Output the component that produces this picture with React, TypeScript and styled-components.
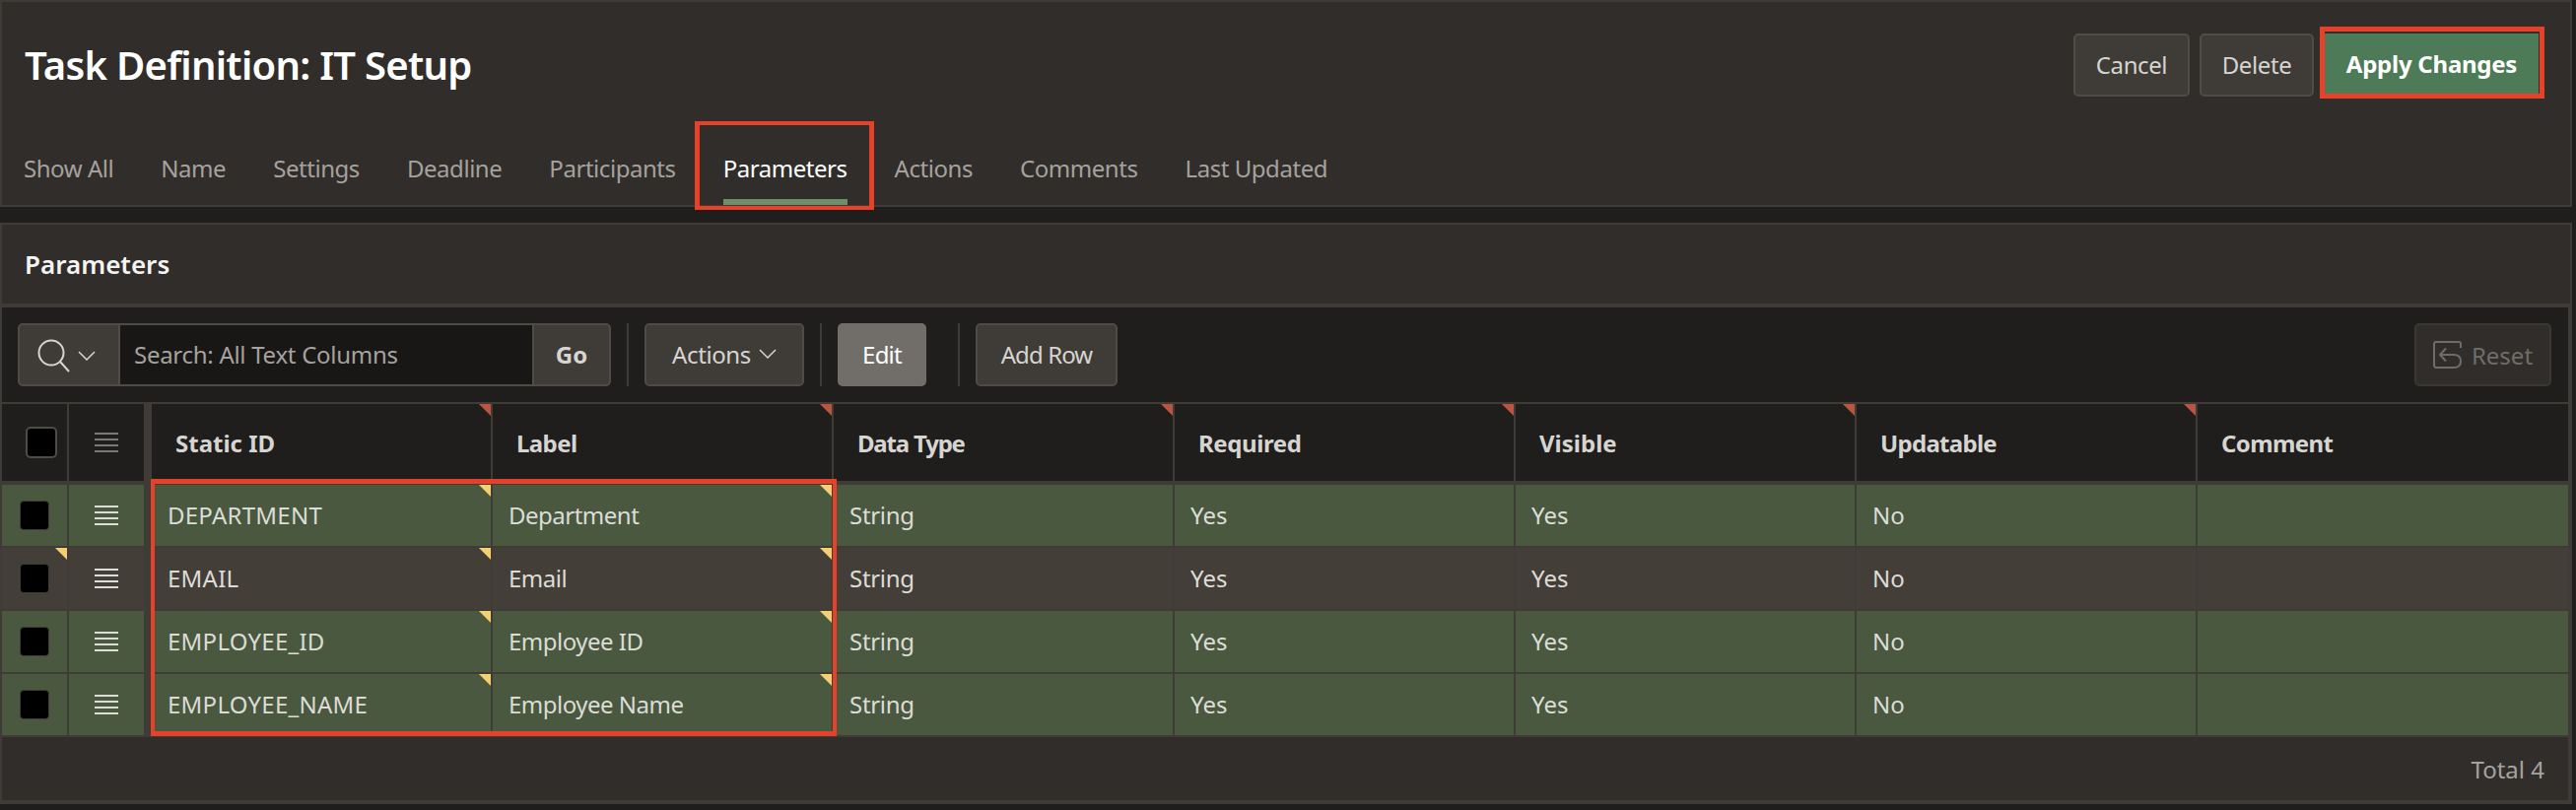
import styled, { createGlobalStyle } from "styled-components";

const GlobalStyle = createGlobalStyle`
  html, body {
    margin: 0;
    padding: 0;
    background: #1f1e1c;
  }
  * {
    box-sizing: border-box;
  }
`;

const tabs = ["Show All", "Name", "Settings", "Deadline", "Participants", "Parameters", "Actions", "Comments", "Last Updated"];
const columns = [
  { title: "Static ID", flagged: true, spacing: 0 },
  { title: "Label", flagged: true, spacing: -0.6 },
  { title: "Data Type", flagged: true, spacing: -1.2 },
  { title: "Required", flagged: true, spacing: -0.4 },
  { title: "Visible", flagged: true, spacing: 0 },
  { title: "Updatable", flagged: true, spacing: -0.7 },
  { title: "Comment", flagged: false, spacing: -0.6 },
];
const rows = [
  { id: "DEPARTMENT", label: "Department", changed: true },
  { id: "EMAIL", label: "Email", changed: false },
  { id: "EMPLOYEE_ID", label: "Employee ID", changed: true },
  { id: "EMPLOYEE_NAME", label: "Employee Name", changed: true },
];

const Lines = ({ color }: { color: string }) => (
  <svg width="24" height="20" viewBox="0 0 24 20" fill={color}>
    <rect y="0" width="24" height="2" />
    <rect y="6" width="24" height="2" />
    <rect y="12" width="24" height="2" />
    <rect y="18" width="24" height="2" />
  </svg>
);

const Chevron = ({ size }: { size: number }) => (
  <svg width={size} height={size / 2 + 1} viewBox="0 0 18 10" fill="none" stroke="#d6d5d1" strokeWidth="1.5">
    <path d="M1 1l8 8 8-8" />
  </svg>
);

export default function App() {
  return (
    <>
      <GlobalStyle />
      <Frame>
        <Header>
          <TitleRow>
            <Title>Task Definition: IT Setup</Title>
            <HeaderActions>
              <Button $w={118}>Cancel</Button>
              <Button $w={116}>Delete</Button>
              <PrimaryButton>
                Apply Changes
                <PrimaryMark />
              </PrimaryButton>
            </HeaderActions>
          </TitleRow>
          <Tabs>
            {tabs.map((t) => (
              <Tab key={t} $active={t === "Parameters"}>
                {t}
                {t === "Parameters" && <TabMark />}
              </Tab>
            ))}
          </Tabs>
        </Header>
        <Stripe />
        <Section>
          <Heading>Parameters</Heading>
          <GridRegion>
            <Toolbar>
              <SearchGroup>
                <SearchMenu>
                  <svg width="34" height="34" viewBox="0 0 34 34" fill="none" stroke="#d6d5d1" strokeWidth="2">
                    <circle cx="14" cy="14" r="12.5" />
                    <path d="M23 23l9 10" />
                  </svg>
                  <Chevron size={18} />
                </SearchMenu>
                <SearchInput>Search: All Text Columns</SearchInput>
                <GoButton>Go</GoButton>
              </SearchGroup>
              <Separator />
              <Button $w={162} $gap={8}>
                Actions <Chevron size={18} />
              </Button>
              <Separator />
              <EditButton>Edit</EditButton>
              <Separator />
              <Button $w={144} $spacing={-0.9}>Add Row</Button>
              <ResetButton>
                <svg width="29" height="28" viewBox="0 0 29 28" fill="none" stroke="#6f6d69" strokeWidth="2">
                  <path d="M28 7V3Q28 1 26 1H3Q1 1 1 3V24Q1 27 3 27H21Q28 27 28 20.500Q28 14 21 14H7" />
                  <path d="M13 7.500L7 14l6 6.500" />
                </svg>
                Reset
              </ResetButton>
            </Toolbar>
            <TableWrap>
              <HeadRow>
                <SelectCell $head>
                  <HeadCheck />
                </SelectCell>
                <HandleCell>
                  <Lines color="#7a7874" />
                </HandleCell>
                {columns.map((c) => (
                  <HeadCell key={c.title} $flagged={c.flagged} $spacing={c.spacing}>
                    {c.title}
                  </HeadCell>
                ))}
              </HeadRow>
              {rows.map((r) => (
                <Row key={r.id} $changed={r.changed}>
                  <SelectCell $flagged={!r.changed}>
                    <RowCheck />
                  </SelectCell>
                  <HandleCell>
                    <Lines color="#dcdcd6" />
                  </HandleCell>
                  <Cell $flagged $spacing={0.25}>{r.id}</Cell>
                  <Cell $flagged $spacing={-0.5}>{r.label}</Cell>
                  <Cell $spacing={-0.3}>String</Cell>
                  <Cell>Yes</Cell>
                  <Cell>Yes</Cell>
                  <Cell>No</Cell>
                  <Cell />
                </Row>
              ))}
              <CellsMark />
            </TableWrap>
            <Footer>Total 4</Footer>
          </GridRegion>
        </Section>
      </Frame>
    </>
  );
}

const red = "#e8412a";
const line = "#3f3c37";
const gridColumns = "68px 84px repeat(6, 346px) 1fr";

const Frame = styled.div`
  width: 2614px;
  height: 822px;
  padding-right: 4px;
  overflow: hidden;
  background: #1f1e1c;
  font-family: "Noto Sans", "Open Sans", sans-serif;
  font-size: 24px;
  color: #dcdcd6;
`;

const Header = styled.header`
  height: 210px;
  background: #312d2a;
  border: 2px solid ${line};
`;

const TitleRow = styled.div`
  display: flex;
  justify-content: space-between;
  padding: 32px 32px 0 23px;
  height: 96px;
`;

const Title = styled.h1`
  margin: 0;
  font-size: 40px;
  line-height: 64px;
  font-weight: 600;
  letter-spacing: -0.72px;
  color: #fff;
`;

const HeaderActions = styled.div`
  display: flex;
  align-items: flex-start;
  gap: 10px;
`;

const Button = styled.div<{ $w: number; $gap?: number; $spacing?: number }>`
  display: flex;
  align-items: center;
  justify-content: center;
  gap: ${(p) => p.$gap ?? 0}px;
  width: ${(p) => p.$w}px;
  height: 64px;
  padding-bottom: 2px;
  background: #3f3c37;
  border: 2px solid #4f4c48;
  border-radius: 5px;
  letter-spacing: ${(p) => p.$spacing ?? -0.4}px;
  color: #d6d5d1;
`;

const PrimaryButton = styled.div`
  position: relative;
  display: flex;
  align-items: center;
  justify-content: center;
  width: 217px;
  height: 61px;
  margin: 0 0 0 1px;
  background: #4d7b57;
  font-weight: 700;
  letter-spacing: -0.25px;
  color: #fff;
`;

const PrimaryMark = styled.div`
  position: absolute;
  inset: -7px -6px -5px -5px;
  border: 5px solid ${red};
`;

const Tabs = styled.nav`
  display: flex;
  gap: 48px;
  padding: 0 0 0 22px;
  margin-top: 42px;
`;

const Tab = styled.div<{ $active?: boolean }>`
  position: relative;
  display: flex;
  align-items: center;
  height: 68px;
  padding-bottom: 2px;
  border-bottom: 6px solid ${(p) => (p.$active ? "#6f8f69" : "transparent")};
  letter-spacing: -0.45px;
  color: ${(p) => (p.$active ? "#fff" : "#a5a29e")};
`;

const TabMark = styled.div`
  position: absolute;
  top: -17px;
  bottom: -11px;
  left: -29px;
  right: -27px;
  border: solid ${red};
  border-width: 4px 5px;
`;

const Stripe = styled.div`
  height: 16px;
`;

const Section = styled.section`
  height: 590px;
  background: #312d2a;
  border: 2px solid ${line};
`;

const Heading = styled.h2`
  display: flex;
  align-items: center;
  margin: 0;
  padding-left: 23px;
  height: 80px;
  font-size: 26px;
  font-weight: 600;
  color: #f4f4f2;
`;

const GridRegion = styled.div`
  height: 506px;
  border-top: 4px solid ${line};
  border-right: 2px solid ${line};
  border-bottom: 2px solid ${line};
`;

const Toolbar = styled.div`
  display: flex;
  align-items: center;
  gap: 16px;
  height: 98px;
  padding: 0 17px 0 16px;
  background: #1f1e1c;
  border-bottom: 2px solid ${line};
`;

const SearchGroup = styled.div`
  display: flex;
  width: 602px;
  height: 64px;
  background: #3f3c37;
  border: 2px solid #4f4c48;
  border-radius: 5px;
`;

const SearchMenu = styled.div`
  display: flex;
  align-items: center;
  gap: 7px;
  width: 102px;
  padding: 2px 0 0 18px;
  border-right: 2px solid #4f4c48;
`;

const SearchInput = styled.div`
  display: flex;
  align-items: center;
  flex: 1;
  padding: 0 0 2px 14px;
  background: #181715;
  letter-spacing: -0.28px;
  color: #a5a39f;
`;

const GoButton = styled.div`
  display: flex;
  align-items: center;
  justify-content: center;
  width: 78px;
  padding-bottom: 2px;
  border-left: 2px solid #4f4c48;
  font-weight: 700;
  color: #d6d5d1;
`;

const Separator = styled.div`
  width: 2px;
  height: 64px;
  background: #3f3c37;
`;

const EditButton = styled.div`
  display: flex;
  align-items: center;
  justify-content: center;
  width: 90px;
  height: 64px;
  padding-bottom: 2px;
  margin-right: 16px;
  background: #716d68;
  border-radius: 5px;
  letter-spacing: -0.8px;
  color: #fff;
`;

const ResetButton = styled.div`
  display: flex;
  align-items: center;
  justify-content: center;
  gap: 10px;
  width: 139px;
  height: 64px;
  margin-left: auto;
  background: #312d2a;
  border: 2px solid #3a3835;
  border-radius: 5px;
  color: #6f6d69;
`;

const TableWrap = styled.div`
  position: relative;
`;

const HeadRow = styled.div`
  display: grid;
  grid-template-columns: ${gridColumns};
  height: 82px;
  border-bottom: 4px solid ${line};
  background: #1f1e1c;
`;

const Row = styled.div<{ $changed: boolean }>`
  display: grid;
  grid-template-columns: ${gridColumns};
  height: 64px;
  border-bottom: 2px solid ${line};
  background: ${(p) => (p.$changed ? "#49583f" : "#443e39")};
`;

const BaseCell = styled.div<{ $flagged?: boolean; $spacing?: number }>`
  position: relative;
  display: flex;
  align-items: center;
  border-right: 2px solid ${line};
  letter-spacing: ${(p) => p.$spacing ?? 0}px;

  &::after {
    content: "";
    display: ${(p) => (p.$flagged ? "block" : "none")};
    position: absolute;
    top: 0;
    right: 0;
    border-top: 12px solid #f5d073;
    border-left: 12px solid transparent;
  }
`;

const SelectCell = styled(BaseCell)<{ $head?: boolean }>`
  padding-left: ${(p) => (p.$head ? 24 : 18)}px;
`;

const HandleCell = styled(BaseCell)`
  padding-left: 26px;
  border-right-width: 8px;
`;

const HeadCell = styled(BaseCell)`
  padding-left: 24px;
  font-weight: 700;
  color: #d6d5d1;

  &::after {
    border-top-color: #b95540;
  }

  &:last-child {
    border-right: none;
  }
`;

const Cell = styled(BaseCell)`
  padding: 0 0 2px 16px;

  &:last-child {
    border-right: none;
  }
`;

const HeadCheck = styled.div`
  width: 32px;
  height: 32px;
  background: #000;
  border: 2px solid #4f4c48;
  border-radius: 5px;
`;

const RowCheck = styled.div`
  width: 30px;
  height: 30px;
  background: #000;
  border: 1px solid #3f3c37;
  border-radius: 4px;
`;

const CellsMark = styled.div`
  position: absolute;
  top: 76px;
  left: 151px;
  width: 696px;
  height: 261px;
  border: solid ${red};
  border-width: 5px 4px;
`;

const Footer = styled.div`
  display: flex;
  align-items: center;
  justify-content: flex-end;
  height: 64px;
  padding-right: 24px;
  color: #a5a3a0;
`;
